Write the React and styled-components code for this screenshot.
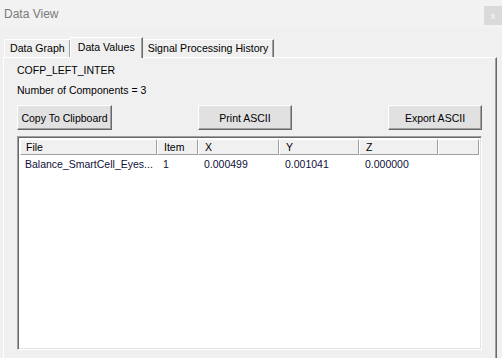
import React from "react";
import styled, { createGlobalStyle } from "styled-components";

const Global = createGlobalStyle`
  html, body { margin: 0; padding: 0; background: #f0f0f0; }
  body { font-family: "Liberation Sans", Arial, sans-serif; }
`;

const Window = styled.div`
  width: 502px;
  height: 358px;
  background: #f0f0f0;
  display: flex;
  flex-direction: column;
  overflow: hidden;
  font-family: "Liberation Sans", Arial, sans-serif;
  font-size: 10.5px;
  color: #000;
`;

const TitleBar = styled.div`
  height: 28px;
  flex: none;
  background: #f2f2f2;
  display: flex;
  align-items: flex-start;
  justify-content: space-between;
`;

const Title = styled.span`
  font-size: 12px;
  color: #7b7b7b;
  margin: 7px 0 0 4px;
  line-height: 14px;
`;

const CloseButton = styled.div`
  width: 18px;
  height: 19px;
  margin-top: 6px;
  background: #dadada;
  color: #f2f2f2;
  font-size: 9px;
  font-weight: bold;
  display: flex;
  align-items: center;
  justify-content: center;
`;

const TabStrip = styled.div`
  display: flex;
  align-items: flex-end;
  height: 29px;
  padding-left: 4px;
  flex: none;
`;

const Tab = styled.div`
  position: relative;
  box-sizing: border-box;
  height: ${(p) => (p.$active ? 21 : 18)}px;
  padding: 0 ${(p) => (p.$active ? 7 : 5)}px;
  margin-bottom: ${(p) => (p.$active ? -1 : 0)}px;
  margin-left: ${(p) => (p.$active ? -1 : 0)}px;
  margin-right: ${(p) => (p.$active ? -1 : 0)}px;
  z-index: ${(p) => (p.$active ? 2 : 1)};
  background: #f0f0f0;
  border-top: 1px solid #fff;
  border-left: 1px solid #fff;
  border-right: 1px solid #696969;
  box-shadow: inset -1px 0 0 #a0a0a0;
  display: flex;
  align-items: ${(p) => (p.$active ? "flex-start" : "center")};
  padding-top: ${(p) => (p.$active ? 3 : 0)}px;
  white-space: nowrap;
  line-height: 13px;
  font-size: 10.6px;
`;

const Panel = styled.div`
  flex: 1;
  margin: 0 5px 0 3px;
  border-top: 1px solid #fff;
  border-left: 1px solid #fff;
  border-right: 1px solid #696969;
  box-shadow: inset -1px 0 0 #a0a0a0;
  padding: 6px 13px 0 13px;
  display: flex;
  flex-direction: column;
  min-height: 0;
`;

const Label = styled.div`
  line-height: 13px;
  margin-top: ${(p) => p.$gap || 0}px;
`;

const ButtonRow = styled.div`
  display: flex;
  margin-top: 8px;
  padding-right: 1px;
`;

const Button = styled.button`
  box-sizing: border-box;
  width: ${(p) => p.$w}px;
  height: 25px;
  margin-left: ${(p) => (p.$push ? "auto" : `${p.$ml || 0}px`)};
  background: #e1e1e1;
  font-family: inherit;
  font-size: 10.5px;
  color: #000;
  padding: 0;
  border-top: 1px solid #fff;
  border-left: 1px solid #fff;
  border-right: 1px solid #696969;
  border-bottom: 1px solid #696969;
  box-shadow: inset -1px -1px 0 #a0a0a0, inset 1px 1px 0 #e3e3e3;
`;

const ListView = styled.div`
  box-sizing: border-box;
  margin-top: 6px;
  height: 214px;
  margin-right: 1px;
  background: #fff;
  border-top: 1px solid #a0a0a0;
  border-left: 1px solid #a0a0a0;
  border-right: 1px solid #fff;
  border-bottom: 1px solid #fff;
  box-shadow: inset 1px 1px 0 #696969, inset -1px -1px 0 #e3e3e3;
  padding: 2px 2px 0 2px;
`;

const Grid = styled.div`
  display: grid;
  grid-template-columns: 137px 41px 81px 80px 79px 1fr;
`;

const HeadCell = styled.div`
  box-sizing: border-box;
  height: 16px;
  line-height: 14px;
  padding-left: ${(p) => (p.$first ? 5 : 6)}px;
  background: #f0f0f0;
  border-top: 1px solid #fff;
  border-left: 1px solid #fff;
  border-right: 1px solid #a0a0a0;
  border-bottom: 1px solid #a0a0a0;
  white-space: nowrap;
  overflow: hidden;
`;

const Cell = styled.div`
  height: 17px;
  line-height: 17px;
  padding-left: ${(p) => (p.$first ? 5 : 6)}px;
  padding-top: 1px;
  color: #10103a;
  white-space: nowrap;
`;

const columns = ["File", "Item", "X", "Y", "Z", ""];
const row = ["Balance_SmartCell_Eyes...", "1", "0.000499", "0.001041", "0.000000", ""];

export default function App() {
  return (
    <Window>
      <Global />
      <TitleBar>
        <Title>Data View</Title>
        <CloseButton>x</CloseButton>
      </TitleBar>
      <TabStrip>
        <Tab>Data Graph</Tab>
        <Tab $active>Data Values</Tab>
        <Tab>Signal Processing History</Tab>
      </TabStrip>
      <Panel>
        <Label>COFP_LEFT_INTER</Label>
        <Label $gap={7}>Number of Components = 3</Label>
        <ButtonRow>
          <Button $w={95}>Copy To Clipboard</Button>
          <Button $w={94} $ml={86}>Print ASCII</Button>
          <Button $w={94} $push>Export ASCII</Button>
        </ButtonRow>
        <ListView>
          <Grid>
            {columns.map((c, i) => (
              <HeadCell key={i} $first={i === 0}>{c}</HeadCell>
            ))}
            {row.map((c, i) => (
              <Cell key={i} $first={i === 0}>{c}</Cell>
            ))}
          </Grid>
        </ListView>
      </Panel>
    </Window>
  );
}
